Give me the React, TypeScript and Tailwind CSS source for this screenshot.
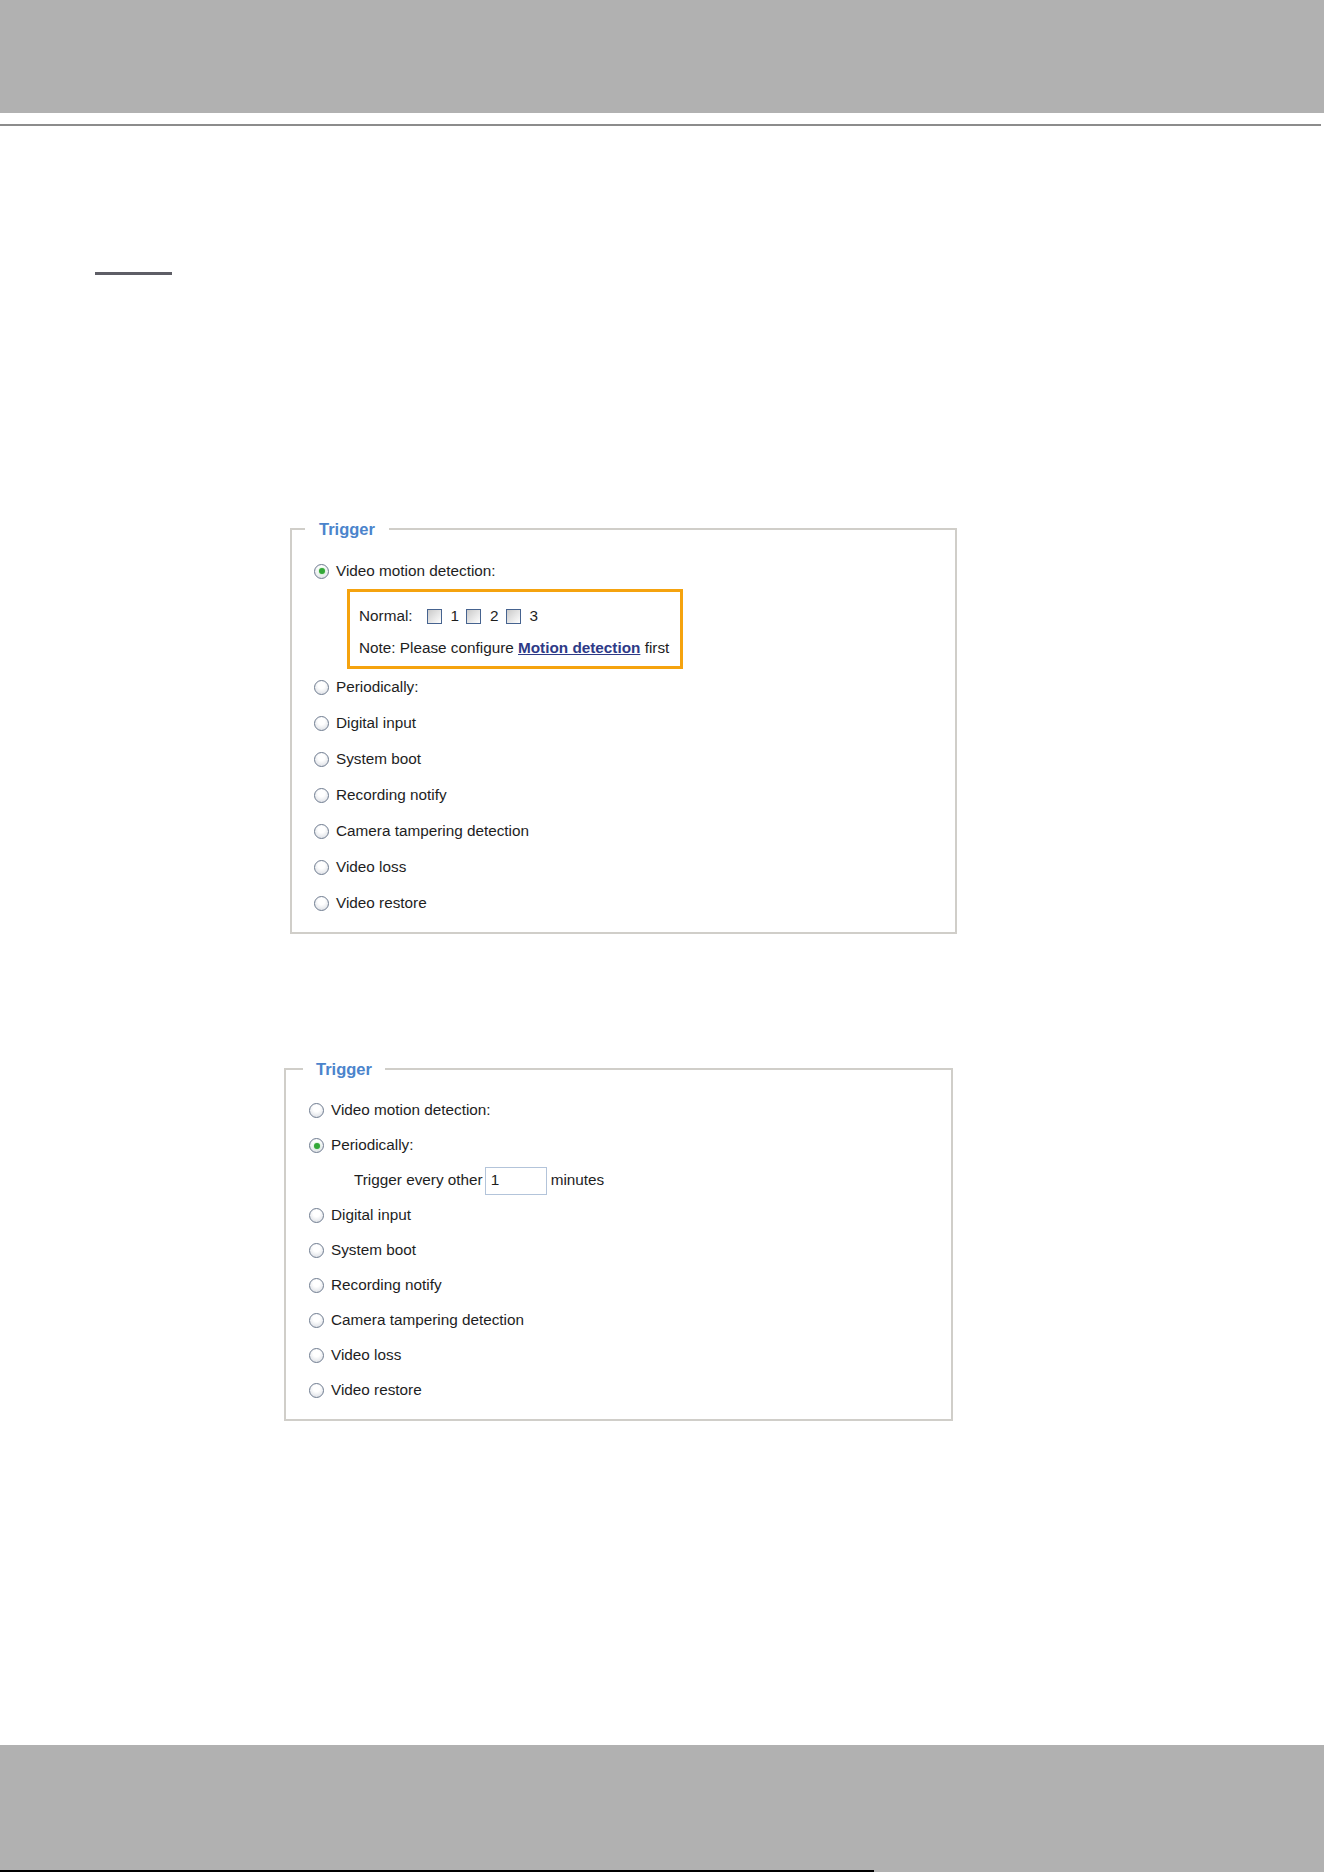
import React from 'react';

const options = [
  'Video motion detection:',
  'Periodically:',
  'Digital input',
  'System boot',
  'Recording notify',
  'Camera tampering detection',
  'Video loss',
  'Video restore',
];

function Radio({ checked }: { checked?: boolean }) {
  return (
    <span className="flex h-[15px] w-[15px] shrink-0 items-center justify-center rounded-full border border-[#6f7c90] bg-[radial-gradient(circle_at_50%_35%,#ffffff_30%,#d3d7de)]">
      {checked && <span className="h-[6px] w-[6px] rounded-full bg-[#33a838] shadow-[0_0_2px_#8fd88f]" />}
    </span>
  );
}

function Checkbox() {
  return <span className="inline-block h-[15px] w-[15px] border border-[#46638f] bg-linear-to-br from-[#cacaca] to-white" />;
}

function RadioRow({ label, checked, h }: { label: string; checked?: boolean; h: string }) {
  return (
    <div className={`flex items-center gap-[7px] ${h}`}>
      <Radio checked={checked} />
      <span>{label}</span>
    </div>
  );
}

export default function App() {
  return (
    <div className="flex h-[1872px] flex-col bg-white font-['Liberation_Sans',Arial,sans-serif] text-[15.3px] text-[#1e1e1e]">
      {/* page header */}
      <div className="h-[113px] bg-[#b1b1b1]" />
      <div className="mt-[11px] h-[2px] w-[1321px] bg-[#8c8c8c]" />

      <div className="ml-[95px] mt-[146px] h-[3px] w-[77px] bg-[#5e5e66]" />

      {/* Trigger: video motion detection */}
      <fieldset className="ml-[290px] mt-[244px] w-[667px] border-2 border-[#d0cec9]">
        <legend className="ml-[13px] px-[14px] text-[16.5px] font-bold leading-[20px] text-[#4b84cc]">Trigger</legend>
        <div className="pl-[22px] pt-[14px] pb-[11px]">
          <RadioRow label={options[0]} checked h="h-[36px]" />
          <div className="ml-[33px] w-[336px] border-[3px] border-[#f5a30f] pl-[9px] pt-[8px]">
            <div className="flex h-[33px] items-center">
              <span>Normal:</span>
              <span className="ml-[14px] flex items-center">
                <Checkbox />
                <span className="ml-[9px] mr-[7px]">1</span>
                <Checkbox />
                <span className="ml-[9px] mr-[7px]">2</span>
                <Checkbox />
                <span className="ml-[9px]">3</span>
              </span>
            </div>
            <div className="flex h-[33px] items-center whitespace-pre pb-[2px]">
              <span>Note: Please configure </span>
              <span className="font-bold text-[#2e3a87] underline">Motion detection</span>
              <span> first</span>
            </div>
          </div>
          {options.slice(1).map((o) => (
            <RadioRow key={o} label={o} h="h-[36px]" />
          ))}
        </div>
      </fieldset>

      {/* Trigger: periodically */}
      <fieldset className="ml-[284px] mt-[125px] w-[669px] border-2 border-[#d0cec9]">
        <legend className="ml-[17px] px-[13px] text-[16.5px] font-bold leading-[20px] text-[#4b84cc]">Trigger</legend>
        <div className="pl-[23px] pt-[14px] pb-[11px]">
          <RadioRow label={options[0]} h="h-[35px]" />
          <RadioRow label={options[1]} checked h="h-[35px]" />
          <div className="flex h-[35px] items-center pl-[45px]">
            <span>Trigger every other</span>
            <span className="ml-[2px] flex h-[28px] w-[62px] items-center border border-[#b3c4da] pl-[5px]">1</span>
            <span className="ml-[4px]">minutes</span>
          </div>
          {options.slice(2).map((o) => (
            <RadioRow key={o} label={o} h="h-[35px]" />
          ))}
        </div>
      </fieldset>

      {/* page footer */}
      <div className="mt-auto flex h-[127px] flex-col justify-end bg-[#b1b1b1]">
        <div className="h-[2px] w-[874px] bg-black" />
      </div>
    </div>
  );
}
